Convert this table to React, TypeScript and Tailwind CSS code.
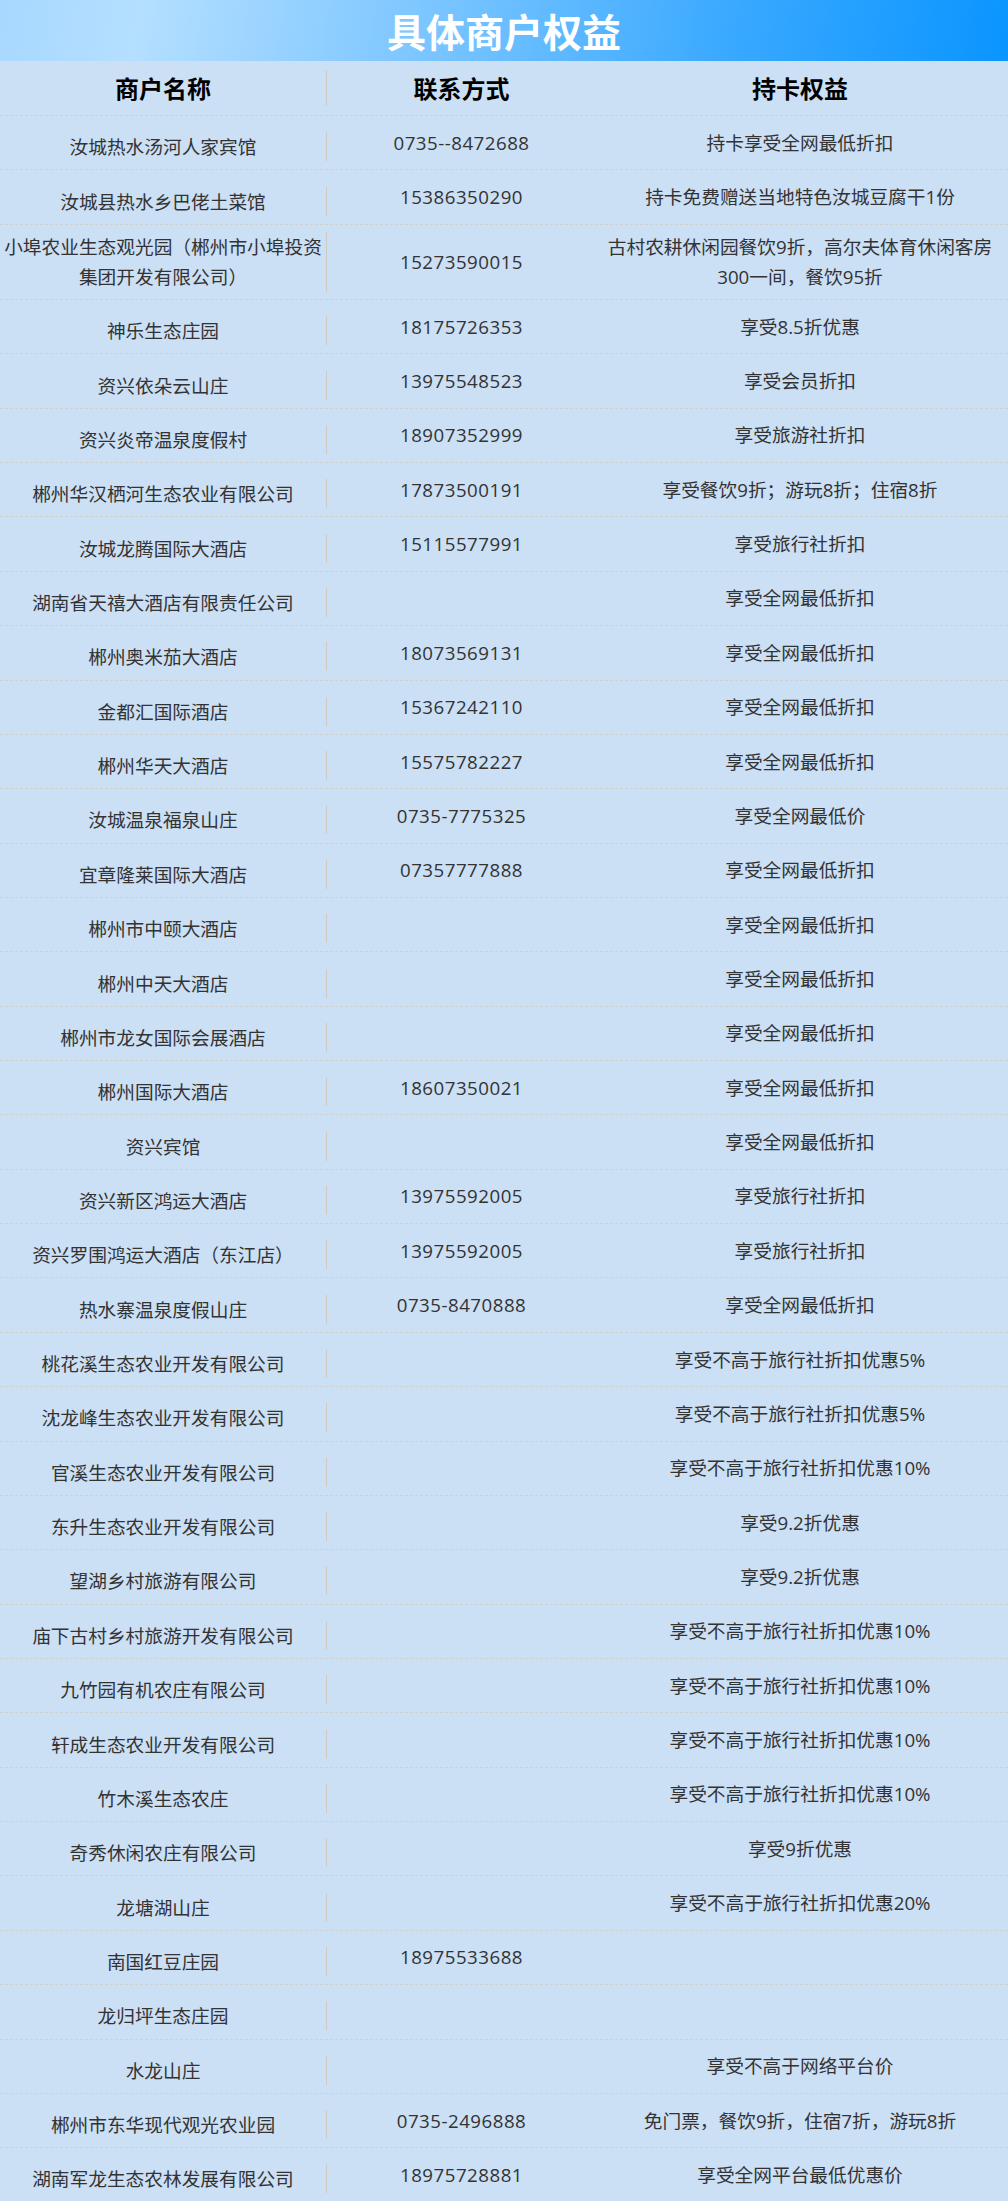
import React from 'react';

type Row = {
  name: string;
  phone?: string;
  benefit?: string;
  tall?: boolean;
};

const rows: Row[] = [
  { name: '汝城热水汤河人家宾馆', phone: '0735--8472688', benefit: '持卡享受全网最低折扣' },
  { name: '汝城县热水乡巴佬土菜馆', phone: '15386350290', benefit: '持卡免费赠送当地特色汝城豆腐干1份' },
  {
    name: '小埠农业生态观光园（郴州市小埠投资\n集团开发有限公司）',
    phone: '15273590015',
    benefit: '古村农耕休闲园餐饮9折，高尔夫体育休闲客房\n300一间，餐饮95折',
    tall: true,
  },
  { name: '神乐生态庄园', phone: '18175726353', benefit: '享受8.5折优惠' },
  { name: '资兴依朵云山庄', phone: '13975548523', benefit: '享受会员折扣' },
  { name: '资兴炎帝温泉度假村', phone: '18907352999', benefit: '享受旅游社折扣' },
  { name: '郴州华汉栖河生态农业有限公司', phone: '17873500191', benefit: '享受餐饮9折；游玩8折；住宿8折' },
  { name: '汝城龙腾国际大酒店', phone: '15115577991', benefit: '享受旅行社折扣' },
  { name: '湖南省天禧大酒店有限责任公司', benefit: '享受全网最低折扣' },
  { name: '郴州奥米茄大酒店', phone: '18073569131', benefit: '享受全网最低折扣' },
  { name: '金都汇国际酒店', phone: '15367242110', benefit: '享受全网最低折扣' },
  { name: '郴州华天大酒店', phone: '15575782227', benefit: '享受全网最低折扣' },
  { name: '汝城温泉福泉山庄', phone: '0735-7775325', benefit: '享受全网最低价' },
  { name: '宜章隆莱国际大酒店', phone: '07357777888', benefit: '享受全网最低折扣' },
  { name: '郴州市中颐大酒店', benefit: '享受全网最低折扣' },
  { name: '郴州中天大酒店', benefit: '享受全网最低折扣' },
  { name: '郴州市龙女国际会展酒店', benefit: '享受全网最低折扣' },
  { name: '郴州国际大酒店', phone: '18607350021', benefit: '享受全网最低折扣' },
  { name: '资兴宾馆', benefit: '享受全网最低折扣' },
  { name: '资兴新区鸿运大酒店', phone: '13975592005', benefit: '享受旅行社折扣' },
  { name: '资兴罗围鸿运大酒店（东江店）', phone: '13975592005', benefit: '享受旅行社折扣' },
  { name: '热水寨温泉度假山庄', phone: '0735-8470888', benefit: '享受全网最低折扣' },
  { name: '桃花溪生态农业开发有限公司', benefit: '享受不高于旅行社折扣优惠5%' },
  { name: '沈龙峰生态农业开发有限公司', benefit: '享受不高于旅行社折扣优惠5%' },
  { name: '官溪生态农业开发有限公司', benefit: '享受不高于旅行社折扣优惠10%' },
  { name: '东升生态农业开发有限公司', benefit: '享受9.2折优惠' },
  { name: '望湖乡村旅游有限公司', benefit: '享受9.2折优惠' },
  { name: '庙下古村乡村旅游开发有限公司', benefit: '享受不高于旅行社折扣优惠10%' },
  { name: '九竹园有机农庄有限公司', benefit: '享受不高于旅行社折扣优惠10%' },
  { name: '轩成生态农业开发有限公司', benefit: '享受不高于旅行社折扣优惠10%' },
  { name: '竹木溪生态农庄', benefit: '享受不高于旅行社折扣优惠10%' },
  { name: '奇秀休闲农庄有限公司', benefit: '享受9折优惠' },
  { name: '龙塘湖山庄', benefit: '享受不高于旅行社折扣优惠20%' },
  { name: '南国红豆庄园', phone: '18975533688' },
  { name: '龙归坪生态庄园' },
  { name: '水龙山庄', benefit: '享受不高于网络平台价' },
  { name: '郴州市东华现代观光农业园', phone: '0735-2496888', benefit: '免门票，餐饮9折，住宿7折，游玩8折' },
  { name: '湖南军龙生态农林发展有限公司', phone: '18975728881', benefit: '享受全网平台最低优惠价' },
];

function MerchantRow({ row }: { row: Row }) {
  return (
    <div
      className={`flex border-b border-dashed border-[#d2d0cc] ${row.tall ? 'h-[75.3px]' : 'h-[54.36px]'}`}
    >
      <div className="flex w-[327px] shrink-0 items-center">
        <div
          className={`w-full whitespace-pre-line border-r border-[#cfc9c0] text-center leading-[29px] ${
            row.tall ? 'leading-[30px]' : 'mt-[8px]'
          }`}
        >
          {row.name}
        </div>
      </div>
      <div className="flex w-[265px] shrink-0 items-center justify-center pl-1 tracking-[0.5px]">
        {row.phone}
      </div>
      <div className="flex flex-1 items-center justify-center whitespace-pre-line px-2 text-center leading-[30px]">
        {row.benefit}
      </div>
    </div>
  );
}

export default function App() {
  return (
    <div className="min-h-screen w-full bg-[#cbdff5] font-['Open_Sans','Noto_Sans_CJK_SC',sans-serif] text-[18.7px] text-[#333]">
      <div className="flex h-[61px] items-center justify-center bg-[linear-gradient(100deg,#a8d8ff_0%,#b4dfff_14%,#7cc6ff_42%,#3aa9ff_72%,#0a95ff_100%)]">
        <h1 className="font-['Noto_Sans_CJK_SC',sans-serif] text-[39px] leading-none font-bold text-white">
          具体商户权益
        </h1>
      </div>

      <div className="flex h-[55px] border-b border-dashed border-[#d2d0cc] font-['Noto_Sans_CJK_SC',sans-serif] text-[24px] font-bold text-black">
        <div className="flex w-[327px] shrink-0 items-center">
          <div className="w-full border-r border-[#cfc9c0] text-center leading-[36px]">商户名称</div>
        </div>
        <div className="flex w-[265px] shrink-0 items-center justify-center pl-1">联系方式</div>
        <div className="flex flex-1 items-center justify-center">持卡权益</div>
      </div>

      {rows.map((row, i) => (
        <MerchantRow key={i} row={row} />
      ))}
    </div>
  );
}
